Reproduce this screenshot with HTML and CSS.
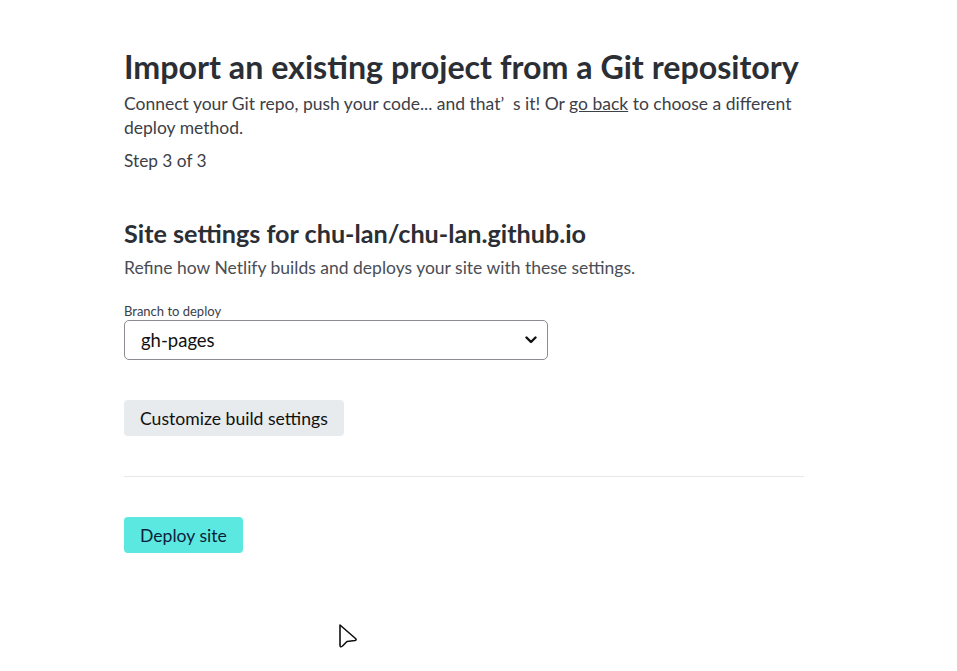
FILE: index.html
```html
<!DOCTYPE html>
<html>
<head>
<meta charset="utf-8">
<link rel="stylesheet" href="styles.css">
</head>
<body>
<main class="page">
  <header class="intro">
    <h1 class="title">Import an existing project from a Git repository</h1>
    <p class="lead">Connect your Git repo, push your code... and that’&nbsp;&nbsp;s it! Or <a class="link" href="#">go back</a> to choose a different deploy method.</p>
    <p class="step">Step 3 of 3</p>
  </header>
  <section class="settings">
    <h2 class="subtitle">Site settings for chu-lan/chu-lan.github.io</h2>
    <p class="desc">Refine how Netlify builds and deploys your site with these settings.</p>
    <label class="field-label">Branch to deploy</label>
    <div class="select">
      <span class="select-value">gh-pages</span>
      <svg class="chev" width="12" height="8" viewBox="0 0 12 8"><path d="M1.5 1.5 L6 6 L10.5 1.5" fill="none" stroke="#111" stroke-width="2.4" stroke-linecap="round" stroke-linejoin="round"/></svg>
    </div>
    <button class="btn btn-secondary">Customize build settings</button>
  </section>
  <hr class="divider">
  <button class="btn btn-primary">Deploy site</button>
</main>
<svg class="cursor" width="22" height="28" viewBox="0 0 22 28"><path d="M2 2 L2 22 Q2 25 4.5 23 L9 18.5 L17 17.5 Q19 17 17.5 15.5 Z" fill="#fff" stroke="#111" stroke-width="1.6" stroke-linejoin="round"/></svg>
</body>
</html>
```
FILE: styles.css
```css
html, body { margin: 0; padding: 0; background: #fff; }
body {
  font-family: "Lato", "Noto Sans", sans-serif;
  color: #2e3238;
  width: 957px;
  height: 671px;
  overflow: hidden;
  position: relative;
}
.page {
  width: 680px;
  padding: 46px 0 0 124px;
}
.title {
  margin: 0;
  font-size: 32.2px;
  line-height: 42px;
  font-weight: 700;
  color: #2b2f35;
}
.lead {
  margin: 4px 0 0;
  font-size: 17.5px;
  line-height: 24px;
  color: #3c4047;
}
.link { color: #3c4047; text-decoration: underline; }
.step {
  margin: 9px 0 0;
  font-size: 17.3px;
  line-height: 24px;
  color: #3c4047;
}
.settings { margin-top: 44px; }
.subtitle {
  margin: 0;
  font-size: 25.2px;
  line-height: 32px;
  font-weight: 700;
  color: #2b2f35;
}
.desc {
  margin: 7px 0 0;
  font-size: 17.5px;
  line-height: 24px;
  color: #4a4e55;
}
.field-label {
  display: block;
  margin-top: 24px;
  font-size: 13px;
  line-height: 14px;
  color: #3c4047;
}
.select {
  box-sizing: border-box;
  width: 424px;
  height: 40px;
  border: 1px solid #8a8d91;
  border-radius: 5px;
  display: flex;
  align-items: center;
  justify-content: space-between;
  padding: 0 10px 0 16px;
  margin-top: 2px;
}
.select-value { font-size: 18.5px; color: #111; }
.btn {
  font-family: inherit;
  font-size: 17.6px;
  border: 0;
  border-radius: 4px;
  height: 36px;
  padding: 0 16px;
  display: block;
  color: #111;
}
.btn-secondary { background: #e8ebee; margin-top: 40px; }
.divider {
  border: 0;
  border-top: 1px solid #e6e8ea;
  margin: 40px 0 40px;
  width: 680px;
}
.btn-primary { background: #5be8e0; color: #0e1e3a; }
.cursor { position: absolute; left: 338px; top: 623px; }
```
